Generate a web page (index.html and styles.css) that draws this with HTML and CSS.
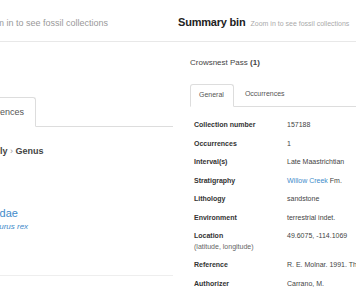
FILE: index.html
```html
<!DOCTYPE html>
<html lang="en">
<head>
    <meta charset="UTF-8">
    <meta name="viewport" content="width=device-width, initial-scale=1.0">
    <title>Summary bin</title>
    <link rel="stylesheet" href="styles.css">
</head>
<body>
    <div class="page">
        <!-- wide view, only its right edge shows -->
        <section class="pane pane-wide">
            <header class="pane-head">
                <h2 class="pane-title">Summary bin</h2>
                <span class="pane-hint">Zoom in to see fossil collections</span>
            </header>

            <ul class="tabs">
                <li class="tab">General</li>
                <li class="tab active">Occurrences</li>
            </ul>

            <div class="taxon-path">Family <span class="sep">›</span> Genus</div>

            <div class="taxon">
                <a class="taxon-family" href="#">Tyrannosauridae</a>
                <a class="taxon-species" href="#">Tyrannosaurus rex</a>
            </div>
        </section>

        <!-- narrow view -->
        <section class="pane pane-narrow">
            <header class="pane-head">
                <h2 class="pane-title">Summary bin</h2>
                <span class="pane-hint">Zoom in to see fossil collections</span>
            </header>

            <div class="pane-body">
                <p class="place">Crowsnest Pass <strong>(1)</strong></p>

                <ul class="tabs">
                    <li class="tab active">General</li>
                    <li class="tab">Occurrences</li>
                </ul>

                <dl class="facts">
                    <dt>Collection number</dt>
                    <dd>157188</dd>
                    <dt>Occurrences</dt>
                    <dd>1</dd>
                    <dt>Interval(s)</dt>
                    <dd>Late Maastrichtian</dd>
                    <dt>Stratigraphy</dt>
                    <dd><a href="#">Willow Creek</a> Fm.</dd>
                    <dt>Lithology</dt>
                    <dd>sandstone</dd>
                    <dt>Environment</dt>
                    <dd>terrestrial indet.</dd>
                    <dt>Location<span class="sub">(latitude, longitude)</span></dt>
                    <dd>49.6075, -114.1069</dd>
                    <dt>Reference</dt>
                    <dd>R. E. Molnar. 1991. The cranial morphology of Tyrannosaurus rex. Palaeontographica Abteilung A 217:137-176</dd>
                    <dt>Authorizer</dt>
                    <dd>Carrano, M.</dd>
                </dl>
            </div>
        </section>
    </div>
</body>
</html>
```

FILE: styles.css
```css
* {
    margin: 0;
    padding: 0;
    box-sizing: border-box;
}

body {
    font-family: "Liberation Sans", Arial, sans-serif;
    background: #fff;
    color: #333;
    overflow: hidden;
}

a {
    color: #428bca;
    text-decoration: none;
}

.page {
    display: flex;
    width: 356px;
    height: 302px;
}

.pane {
    overflow: hidden;
    white-space: nowrap;
}

.pane-head {
    display: flex;
    align-items: baseline;
    height: 42px;
    border-bottom: 1px solid #e8e8e8;
}

.pane-title {
    font-weight: bold;
    color: #222;
}

.tabs {
    list-style: none;
    display: flex;
    align-items: flex-end;
    border-bottom: 1px solid #ddd;
}

.tab {
    border: 1px solid transparent;
    border-radius: 3px 3px 0 0;
    color: #555;
}

.tab + .tab {
    margin-left: 2px;
}

.tab.active {
    border-color: #ddd;
    border-bottom-color: #fff;
    margin-bottom: -1px;
    background: #fff;
}

/* ---- wide pane ---- */

.pane-wide {
    width: 173px;
    flex: none;
}

.pane-wide .pane-head {
    padding-top: 13px;
}

.pane-wide .pane-title {
    font-size: 14px;
    letter-spacing: -0.25px;
    line-height: 16px;
    margin-left: -111px;
}

.pane-wide .pane-hint {
    font-size: 9px;
    color: #999;
    margin-left: 6px;
}

.pane-wide .tabs {
    margin-top: 54px;
    margin-left: -97px;
}

.pane-wide .tab {
    font-size: 9px;
    line-height: 12px;
    padding: 8px 11px;
}

.taxon-path {
    margin-top: 18px;
    margin-left: -21px;
    font-size: 9px;
    line-height: 12px;
    font-weight: bold;
    color: #444;
}

.taxon-path .sep {
    font-weight: normal;
    color: #999;
}

.taxon {
    padding-bottom: 42px;
    border-bottom: 1px solid #eee;
}

.taxon-family {
    display: block;
    margin-top: 49px;
    margin-left: -64px;
    font-size: 11px;
    line-height: 14px;
}

.taxon-species {
    display: block;
    margin-top: 1px;
    margin-left: -38px;
    font-size: 8px;
    line-height: 12px;
    font-style: italic;
}

/* ---- narrow pane ---- */

.pane-narrow {
    flex: 1;
    min-width: 0;
}

.pane-narrow .pane-head {
    padding: 16px 0 0 5px;
}

.pane-narrow .pane-title {
    font-size: 11px;
    letter-spacing: -0.2px;
    line-height: 13px;
}

.pane-narrow .pane-hint {
    font-size: 7px;
    color: #aaa;
    margin-left: 5px;
}

.pane-body {
    padding-left: 17px;
}

.place {
    margin-top: 16px;
    font-size: 8px;
    line-height: 10px;
    color: #444;
}

.place strong {
    font-weight: 600;
}

.pane-narrow .tabs {
    margin-top: 15px;
}

.pane-narrow .tab {
    font-size: 7px;
    line-height: 10px;
    padding: 5px 9px 6px 8px;
}

.facts {
    display: grid;
    grid-template-columns: 93px 1fr;
    margin-top: 9px;
    font-size: 7px;
    line-height: 10.5px;
}

.facts dt,
.facts dd {
    padding: 4px 0 4px 4px;
}

.facts dt {
    font-weight: bold;
    color: #333;
}

.facts dd {
    color: #444;
    overflow: hidden;
}

.facts .sub {
    display: block;
    font-weight: normal;
    color: #666;
}
```
